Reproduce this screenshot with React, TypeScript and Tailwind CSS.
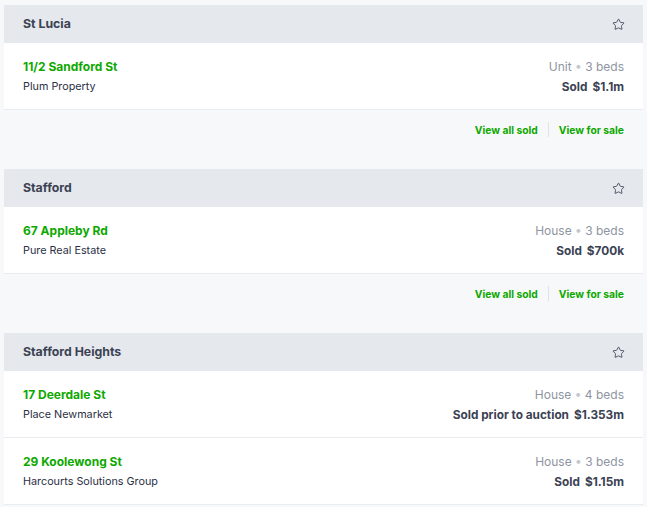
import React from 'react';
import { Star } from 'lucide-react';

interface Listing {
  address: string;
  agency: string;
  type: string;
  beds: number;
  status: string;
  price: string;
}

interface Suburb {
  name: string;
  listings: Listing[];
  footer: boolean;
}

const suburbs: Suburb[] = [
  {
    name: 'St Lucia',
    footer: true,
    listings: [
      { address: '11/2 Sandford St', agency: 'Plum Property', type: 'Unit', beds: 3, status: 'Sold', price: '$1.1m' },
    ],
  },
  {
    name: 'Stafford',
    footer: true,
    listings: [
      { address: '67 Appleby Rd', agency: 'Pure Real Estate', type: 'House', beds: 3, status: 'Sold', price: '$700k' },
    ],
  },
  {
    name: 'Stafford Heights',
    footer: false,
    listings: [
      { address: '17 Deerdale St', agency: 'Place Newmarket', type: 'House', beds: 4, status: 'Sold prior to auction', price: '$1.353m' },
      { address: '29 Koolewong St', agency: 'Harcourts Solutions Group', type: 'House', beds: 3, status: 'Sold', price: '$1.15m' },
    ],
  },
];

const ListingRow: React.FC<{ listing: Listing }> = ({ listing }) => (
  <div className="flex h-[67px] items-start justify-between border-b border-[#e9ebef] bg-white px-[19px] pt-[15px]">
    <div>
      <div className="text-[12px] font-bold leading-[18px] text-[#0ea800]">{listing.address}</div>
      <div className="mt-[3px] text-[10.8px] leading-[16px] text-[#2c2f45]">{listing.agency}</div>
    </div>
    <div className="text-right">
      <div className="text-[12px] leading-[18px] text-[#8e95a2]">
        {listing.type} <span className="text-[#c3c7ce]">•</span> {listing.beds} beds
      </div>
      <div className="mt-[3px] text-[11.8px] font-bold leading-[16px] text-[#3b4253]">
        {listing.status}
        <span className="ml-[5px]">{listing.price}</span>
      </div>
    </div>
  </div>
);

export default function App() {
  return (
    <div className="min-h-[507px] bg-[#f7f8fa] px-1 pt-[5px] font-['Inter',sans-serif]">
      {suburbs.map((suburb) => (
        <div key={suburb.name}>
          <div className="flex h-[38px] items-center justify-between bg-[#e5e8ed] px-[19px]">
            <span className="text-[12.3px] font-bold text-[#3b4253]">{suburb.name}</span>
            <Star size={13} strokeWidth={1.6} className="-mr-[1px] text-[#3b4253]" />
          </div>
          {suburb.listings.map((l) => (
            <ListingRow key={l.address} listing={l} />
          ))}
          {suburb.footer && (
            <div className="flex h-[59px] items-start justify-end px-[19px] pt-[12px]">
              <a className="text-[10.3px] font-bold leading-[16px] text-[#0ea800]">View all sold</a>
              <span className="mx-[10px] h-[15px] w-px bg-[#dfe2e7]" />
              <a className="text-[10.3px] font-bold leading-[16px] text-[#0ea800]">View for sale</a>
            </div>
          )}
        </div>
      ))}
    </div>
  );
}
